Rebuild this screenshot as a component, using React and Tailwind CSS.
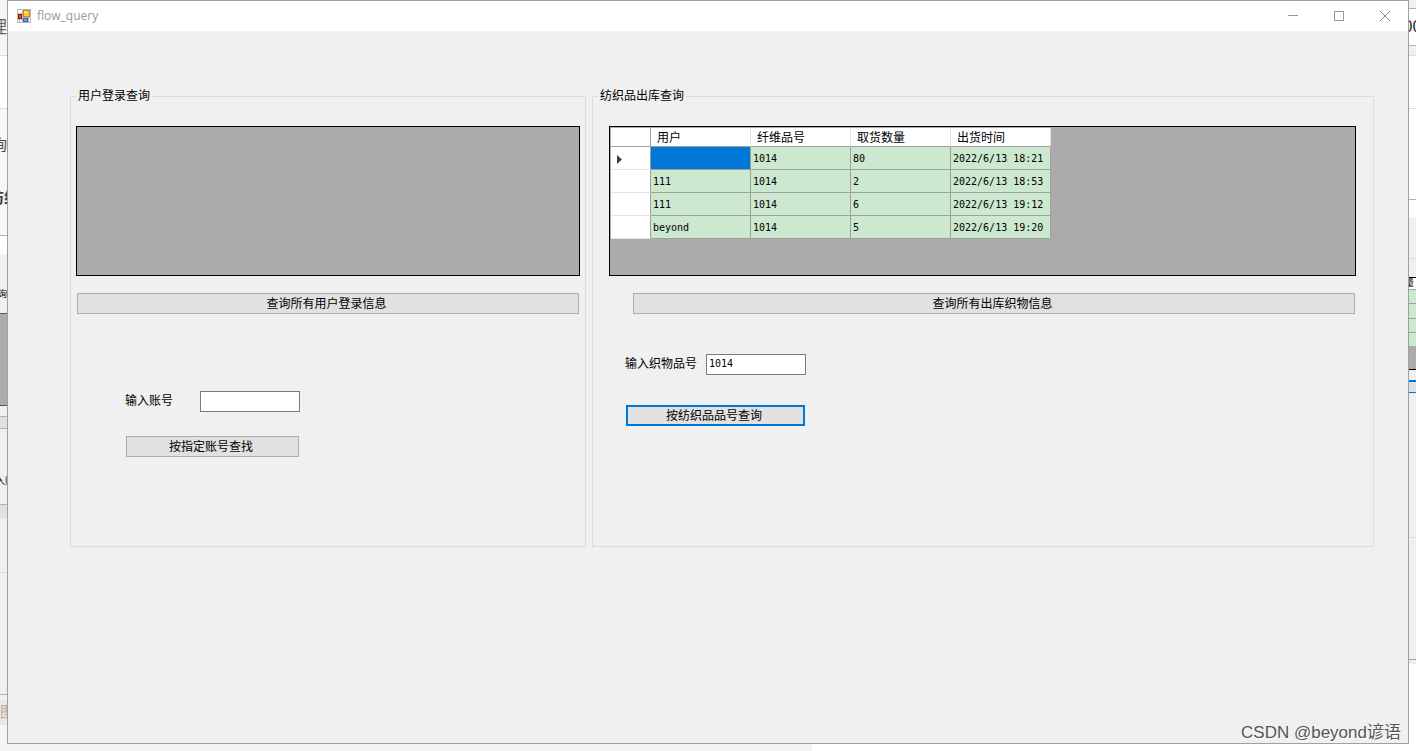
import React, { useState } from 'react';

const loginRows = [];

const stockRows = [
  { user: '', fiber: '1014', amount: '80', time: '2022/6/13 18:21' },
  { user: '111', fiber: '1014', amount: '2', time: '2022/6/13 18:53' },
  { user: '111', fiber: '1014', amount: '6', time: '2022/6/13 19:12' },
  { user: 'beyond', fiber: '1014', amount: '5', time: '2022/6/13 19:20' },
];

const columns = [
  { key: 'user', title: '用户' },
  { key: 'fiber', title: '纤维品号' },
  { key: 'amount', title: '取货数量' },
  { key: 'time', title: '出货时间' },
];

// Slices of the windows that lie behind the form
const leftStrip = [
  { cls: 'h-14 bg-[#f5f5f5] border-b border-[#dcdcdc] items-center justify-end text-[17px] text-[#666]', text: '理' },
  { cls: 'h-[53px] bg-white border-b border-[#dcdcdc]' },
  { cls: 'h-[73px] bg-[#f7f7f7] items-center justify-end text-[15px] text-[#444]', text: '询' },
  { cls: 'h-[54px] bg-[#f7f7f7] border-b border-[#b4b4b4] pt-1 text-[16px] leading-6 font-bold text-[#444]', text: '纺织', shift: '-ml-3' },
  { cls: 'h-[18px] bg-white' },
  { cls: 'h-[59px] bg-[#f0f0f0] items-end justify-end pb-3 text-[9px] text-black', text: '询' },
  { cls: 'h-[93px] bg-[#ababab] border-y border-[#555]' },
  { cls: 'h-[10px] bg-[#f0f0f0]' },
  { cls: 'h-[13px] bg-[#e1e1e1] border-y border-[#b4b4b4]' },
  { cls: 'h-[75px] bg-[#f0f0f0] items-end pb-4 text-[9px] text-black', text: '入账', shift: '-ml-1' },
  { cls: 'h-[14px] bg-[#e1e1e1] border-t border-[#b4b4b4]' },
  { cls: 'h-[55px] bg-[#f0f0f0] border-b border-[#dcdcdc]' },
  { cls: 'h-[122px] bg-[#f0f0f0] border-b border-[#b4b4b4]' },
  { cls: 'h-[5px] bg-[#f0f0f0]' },
  { cls: 'h-[25px] bg-[#e8e8e8] items-center text-[15px] text-[#c9a0a0]', text: '图' },
  { cls: 'grow bg-[#f5f5f5]' },
];

const rightStrip = [
  { cls: 'h-[9px] bg-[#f0f0f0] border-b border-[#b4b4b4]' },
  { cls: 'h-[37px] bg-white border-b border-[#b4b4b4] items-center text-[17px] text-[#333]', text: '00', shift: '-ml-1.5' },
  { cls: 'h-[10px] bg-[#f0f0f0] border-b border-[#dcdcdc]' },
  { cls: 'h-[53px] bg-white border-b border-[#dcdcdc]' },
  { cls: 'h-[91px] bg-white border-b border-[#b4b4b4]' },
  { cls: 'h-[18px] bg-white' },
  { cls: 'h-[41px] bg-[#f0f0f0] border-b border-[#dcdcdc]' },
  { cls: 'h-[19px] bg-[#f0f0f0] border-b border-black' },
  { cls: 'h-3 bg-white border-b border-[#a0a0a0] items-center text-[9px] text-black', text: '量', shift: '-ml-1' },
  { cls: 'h-[14px] bg-[#cce8cf] border-b border-[#a0a0a0]' },
  { cls: 'h-[15px] bg-[#cce8cf] border-b border-[#a0a0a0]' },
  { cls: 'h-[14px] bg-[#cce8cf] border-b border-[#a0a0a0]' },
  { cls: 'h-[13px] bg-[#cce8cf]' },
  { cls: 'h-6 bg-[#ababab] border-b border-black' },
  { cls: 'h-[10px] bg-[#f0f0f0]' },
  { cls: 'h-[13px] bg-[#e1e1e1] border-t-2 border-b border-[#0078d7]' },
  { cls: 'h-[145px] bg-[#f0f0f0] border-b border-[#dcdcdc]' },
  { cls: 'h-[122px] bg-[#f0f0f0] border-b border-[#a0a0a0]' },
  { cls: 'h-1 bg-[#f0f0f0]' },
  { cls: 'grow bg-white' },
];

const Strip = ({ parts }) => (
  <div className="flex w-[7px] shrink-0 flex-col overflow-hidden" aria-hidden="true">
    {parts.map((part, index) => (
      <div key={index} className={`flex shrink-0 overflow-hidden ${part.cls}`}>
        {part.text && <span className={`shrink-0 ${part.shift || ''}`}>{part.text}</span>}
      </div>
    ))}
  </div>
);

const FormIcon = () => (
  <svg width="14" height="14" viewBox="0 0 14 14" shapeRendering="crispEdges">
    <rect width="14" height="14" fill="#b9b9b9" />
    <path d="M1 1h4v3H1zM1 11h1v2H1zM3 11h2v2H3zM12 9h1v4h-1z" fill="#fff" />
    <rect x="6" y="1" width="7" height="7" fill="#c98a10" />
    <rect x="7" y="2" width="5" height="5" fill="#fcc83a" />
    <rect x="7" y="2" width="3" height="2" fill="#ffe58a" />
    <rect x="1" y="5" width="4" height="5" fill="#a3150f" />
    <rect x="2" y="6" width="2" height="3" fill="#dd4a3c" />
    <rect x="6" y="9" width="5" height="4" fill="#2a62c4" />
    <rect x="7" y="10" width="3" height="2" fill="#6ba4f5" />
  </svg>
);

const TitleBar = () => (
  <header className="flex h-[30px] shrink-0 items-center bg-white pl-[9px]">
    <FormIcon />
    <h1 className="ml-1.5 grow font-['Open_Sans','Noto_Sans',sans-serif] text-[12px] text-[#999]">flow_query</h1>
    <button type="button" aria-label="最小化" className="flex h-full w-[46px] items-center justify-center text-[#999]">
      <svg width="10" height="10" viewBox="0 0 10 10" shapeRendering="crispEdges">
        <path d="M0 4h10v1H0z" fill="currentColor" />
      </svg>
    </button>
    <button type="button" aria-label="最大化" className="flex h-full w-[46px] items-center justify-center text-[#999]">
      <svg width="10" height="10" viewBox="0 0 10 10" fill="none" stroke="currentColor">
        <path d="M.5 .5h9v9h-9z" />
      </svg>
    </button>
    <button type="button" aria-label="关闭" className="flex h-full w-[46px] items-center justify-center text-[#888]">
      <svg width="10" height="10" viewBox="0 0 10 10" fill="none" stroke="currentColor">
        <path d="M0 0l10 10M10 0L0 10" />
      </svg>
    </button>
  </header>
);

const Button = ({ className = '', focused = false, children, ...props }) => (
  <button
    type="button"
    className={`flex h-[21px] items-center justify-center bg-[#e1e1e1] pr-[3px] pb-0.5 leading-none hover:bg-[#e5f1fb] ${focused
      ? 'border-2 border-[#0078d7]'
      : 'border border-[#adadad]'
      } ${className}`}
    {...props}
  >
    {children}
  </button>
);

const TextBox = (props) => (
  <input
    type="text"
    className="h-[21px] w-[100px] border border-[#7a7a7a] bg-white px-0.5 pb-0.5 font-['DejaVu_Sans_Mono','Noto_Sans_CJK_SC',monospace] text-[10px] outline-none"
    {...props}
  />
);

const DataGrid = ({ rows }) => (
  <div className="h-[150px] overflow-hidden border border-black bg-[#ababab]">
    {rows.length > 0 && (
      <table className="m-px w-[440px] table-fixed border-separate border-spacing-0 text-left">
        <thead>
          <tr className="h-[19px] bg-white">
            <th className="w-10 border-r border-b border-[#a0a0a0] p-0" aria-label="当前行" />
            {columns.map((col) => (
              <th
                key={col.key}
                className="w-[100px] border-r border-b border-r-[#e3e3e3] border-b-[#a0a0a0] py-0 pr-0 pl-1.5 leading-[18px] font-normal"
              >
                {col.title}
              </th>
            ))}
          </tr>
        </thead>
        <tbody>
          {rows.map((row, index) => (
            <tr key={index} className="h-[23px] bg-[#cce8cf]">
              <th className="border-r border-b border-r-[#a0a0a0] border-b-[#e3e3e3] bg-white px-0 pt-0.5 pb-0">
                {index === 0 && (
                  <svg className="ml-1.5 block" width="5" height="9" viewBox="0 0 5 9">
                    <path d="M0 0l5 4.5L0 9z" fill="#404040" />
                  </svg>
                )}
              </th>
              {columns.map((col, i) => (
                <td
                  key={col.key}
                  className={`border-r border-b border-[#a0a0a0] pt-0.5 pr-0 pb-0 pl-0.5 font-['DejaVu_Sans_Mono','Noto_Sans_CJK_SC',monospace] text-[10px] leading-5 whitespace-nowrap ${index === 0 && i === 0 ? 'bg-[#0078d7] text-white' : ''}`}
                >
                  {row[col.key]}
                </td>
              ))}
            </tr>
          ))}
        </tbody>
      </table>
    )}
  </div>
);

const GroupBox = ({ title, children }) => (
  <fieldset className="h-[459px] min-w-0 border border-[#dcdcdc] px-[5px]">
    <legend className="px-0.5 pb-0.5 leading-[14px]">{title}</legend>
    {children}
  </fieldset>
);

const App = () => {
  const [account, setAccount] = useState('');
  const [fiberNo, setFiberNo] = useState('1014');

  return (
    <div className="relative flex min-h-screen flex-col bg-white font-['Liberation_Sans','Noto_Sans_CJK_SC',sans-serif] text-[12px] text-black">
      <div className="flex grow">
        <Strip parts={leftStrip} />

        <div className="flex min-w-0 grow flex-col border border-[#a0a0a0] bg-[#f0f0f0]">
          <TitleBar />

          <main className="grid grid-cols-[516fr_782fr] gap-1.5 pt-[57px] pr-[34px] pl-[62px] font-['Noto_Sans_CJK_SC',sans-serif]">
            <GroupBox title="用户登录查询">
              <div className="pt-[22px]">
                <DataGrid rows={loginRows} />
                <div className="mt-[17px] flex px-px">
                  <Button className="grow">查询所有用户登录信息</Button>
                </div>
                <div className="mt-[77px] ml-[49px] flex items-center gap-[27px]">
                  <label htmlFor="account" className="pb-[3px] leading-[18px]">输入账号</label>
                  <TextBox id="account" value={account} onChange={(e) => setAccount(e.target.value)} />
                </div>
                <Button className="mt-6 ml-[50px] w-[173px]">按指定账号查找</Button>
              </div>
            </GroupBox>

            <GroupBox title="纺织品出库查询">
              <div className="pt-[22px] pr-3 pl-[11px]">
                <DataGrid rows={stockRows} />
                <div className="mt-[17px] flex pr-px pl-6">
                  <Button className="grow">查询所有出库织物信息</Button>
                </div>
                <div className="mt-10 ml-4 flex items-center gap-[9px]">
                  <label htmlFor="fiberNo" className="pb-[3px] leading-[18px]">输入织物品号</label>
                  <TextBox id="fiberNo" value={fiberNo} onChange={(e) => setFiberNo(e.target.value)} />
                </div>
                <Button className="mt-[30px] ml-[17px] w-[179px]" focused>按纺织品品号查询</Button>
              </div>
            </GroupBox>
          </main>
        </div>

        <Strip parts={rightStrip} />
      </div>

      <div className="flex h-[7px] shrink-0">
        <div className="w-[812px] bg-[#f5f5f5]" />
        <div className="grow bg-white" />
      </div>

      <p className="absolute right-[15px] bottom-[6px] text-[17px] leading-6 text-[#555] [text-shadow:1px_1px_0_#fff]">
        CSDN @beyond谚语
      </p>
    </div>
  );
};

export default App;
